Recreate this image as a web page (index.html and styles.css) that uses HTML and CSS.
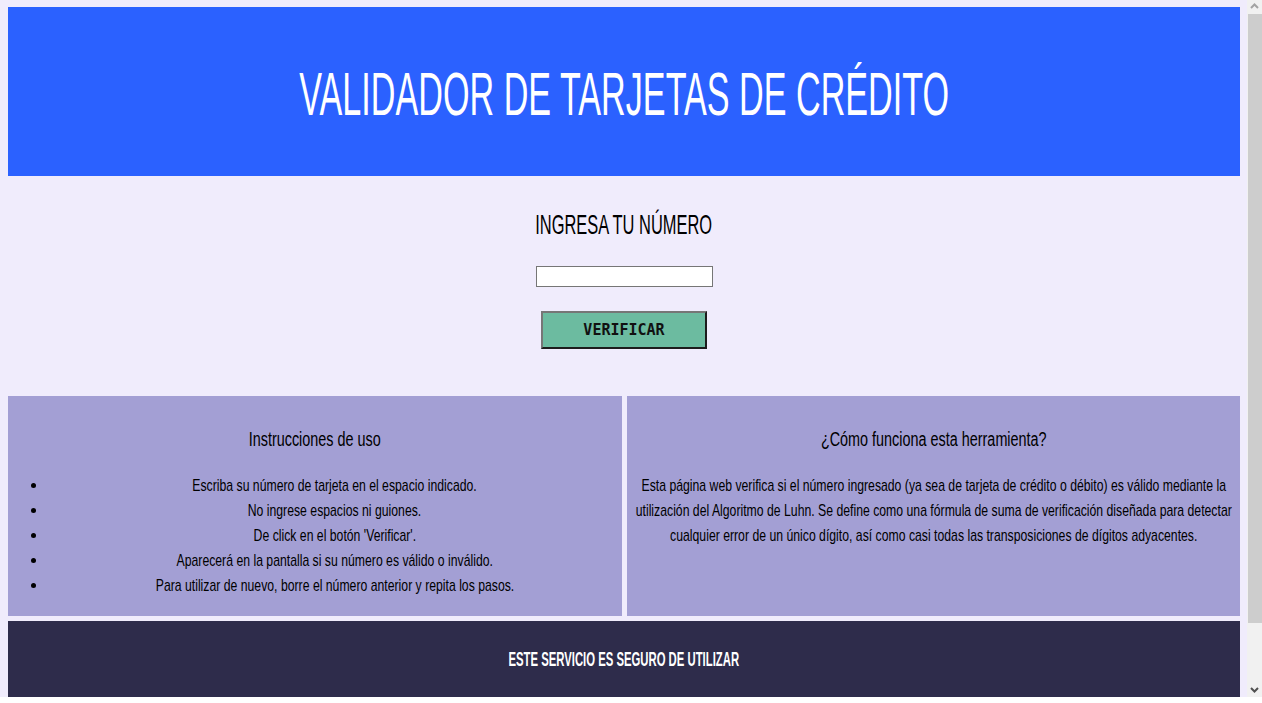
FILE: index.html
```html
<!DOCTYPE html>
<html lang="es">
<head>
<meta charset="utf-8">
<title>Validador de tarjetas de crédito</title>
<link rel="stylesheet" href="styles.css">
</head>
<body>
  <header class="hero">
    <h1 class="hero-title"><span class="squeeze squeeze-title">VALIDADOR DE TARJETAS DE CRÉDITO</span></h1>
  </header>

  <section class="form-area">
    <h2 class="form-title"><span class="squeeze squeeze-h2">INGRESA TU NÚMERO</span></h2>
    <input class="card-input" type="text" aria-label="Número de tarjeta">
    <button class="verify-btn" type="button">VERIFICAR</button>
  </section>

  <section class="info">
    <article class="info-card">
      <h3 class="info-title"><span class="squeeze squeeze-body">Instrucciones de uso</span></h3>
      <ul class="steps">
        <li><span class="squeeze squeeze-body">Escriba su número de tarjeta en el espacio indicado.</span></li>
        <li><span class="squeeze squeeze-body">No ingrese espacios ni guiones.</span></li>
        <li><span class="squeeze squeeze-body">De click en el botón 'Verificar'.</span></li>
        <li><span class="squeeze squeeze-body">Aparecerá en la pantalla si su número es válido o inválido.</span></li>
        <li><span class="squeeze squeeze-body">Para utilizar de nuevo, borre el número anterior y repita los pasos.</span></li>
      </ul>
    </article>
    <article class="info-card info-card-text">
      <h3 class="info-title"><span class="squeeze squeeze-body">¿Cómo funciona esta herramienta?</span></h3>
      <p class="info-text">Esta página web verifica si el número ingresado (ya sea de tarjeta de crédito o débito) es válido mediante la utilización del Algoritmo de Luhn. Se define como una fórmula de suma de verificación diseñada para detectar cualquier error de un único dígito, así como casi todas las transposiciones de dígitos adyacentes.</p>
    </article>
  </section>

  <footer class="site-footer">
    <p class="footer-text"><span class="squeeze squeeze-footer">ESTE SERVICIO ES SEGURO DE UTILIZAR</span></p>
  </footer>

  <div class="scrollbar" aria-hidden="true">
    <svg class="scroll-arrow" width="15" height="14" viewBox="0 0 15 14">
      <polyline points="4,8 7.5,4.5 11,8" fill="none" stroke="#a3a3a3" stroke-width="2"/>
    </svg>
    <div class="scroll-track">
      <div class="scroll-thumb"></div>
    </div>
    <svg class="scroll-arrow" width="15" height="14" viewBox="0 0 15 14">
      <polyline points="4,5 7.5,8.5 11,5" fill="none" stroke="#505050" stroke-width="2"/>
    </svg>
  </div>
  <div class="window-edge" aria-hidden="true"></div>
</body>
</html>
```

FILE: styles.css
```css
html {
  background: #f0ecfc;
}

body {
  margin: 7px 22px 8px 8px;
  font-family: "Liberation Sans", Arial, sans-serif;
  color: #000;
  background: #f0ecfc;
}

.squeeze {
  display: inline-block;
  white-space: nowrap;
  transform-origin: 50% 50%;
}

.squeeze-title { transform: scaleX(0.56); }
.squeeze-h2 { transform: scaleX(0.587); }
.squeeze-body { transform: scaleX(0.72); }
.squeeze-footer { transform: scaleX(0.566); }

/* Header */
.hero {
  height: 169px;
  box-sizing: border-box;
  padding-top: 6px;
  background: #2b61ff;
  display: flex;
  align-items: center;
  justify-content: center;
}

.hero-title {
  margin: 0;
  font-size: 61px;
  font-weight: normal;
  line-height: 1;
  color: #fff;
  white-space: nowrap;
}

/* Form */
.form-area {
  padding: 35px 0 47px;
  text-align: center;
}

.form-title {
  margin: 0 0 27px;
  font-size: 28px;
  font-weight: normal;
  line-height: 1;
  color: #000;
}

.card-input {
  display: block;
  margin: 0 auto 24px;
  width: 177px;
  height: 21px;
  box-sizing: border-box;
  padding: 1px 2px;
  border: 1px solid #767676;
  background: #fff;
  font-size: 13px;
}

.verify-btn {
  display: block;
  margin: 0 auto;
  width: 166px;
  height: 38px;
  box-sizing: border-box;
  padding: 0;
  background: #6cbba0;
  border: 2px solid;
  border-color: #767676 #1c1c1c #1c1c1c #767676;
  font-family: "DejaVu Sans Mono", "Liberation Mono", monospace;
  font-size: 15px;
  font-weight: bold;
  color: #111;
}

/* Info cards */
.info {
  display: grid;
  grid-template-columns: 1fr 1fr;
  gap: 5px;
}

.info-card {
  height: 220px;
  box-sizing: border-box;
  padding: 33px 0 0;
  background: #a39fd4;
  overflow: hidden;
  text-align: center;
}

.info-card-text {
  padding: 33px 5px 0;
}

.info-title {
  margin: 0 0 24px;
  font-size: 20px;
  font-weight: normal;
  line-height: 1;
}

.steps {
  margin: 0;
  padding: 0 0 0 40px;
}

.steps li {
  font-size: 17px;
  line-height: 25px;
}

.info-text {
  margin: 0;
  width: calc(100% / 0.72);
  transform: scaleX(0.72);
  transform-origin: 0 0;
  font-size: 17px;
  line-height: 25px;
  text-align: center;
}

/* Footer */
.site-footer {
  margin-top: 5px;
  height: 140px;
  box-sizing: border-box;
  padding-top: 28px;
  background: #2e2c4b;
  text-align: center;
}

.footer-text {
  margin: 0;
  font-size: 20px;
  font-weight: bold;
  line-height: 1;
  color: #fff;
}

/* Browser chrome visible in the reference: scrollbar and bottom window edge */
.scrollbar {
  position: fixed;
  top: 0;
  right: 0;
  width: 15px;
  height: calc(100vh - 6px);
  background: #f1f1f1;
  display: flex;
  flex-direction: column;
}

.scroll-arrow {
  display: block;
  flex: none;
}

.scroll-track {
  flex: 1;
  padding-left: 1px;
}

.scroll-thumb {
  height: 609px;
  background: #cdcdcd;
}

.window-edge {
  position: fixed;
  left: 0;
  right: 0;
  bottom: 0;
  height: 6px;
  background: #fff;
}
```
